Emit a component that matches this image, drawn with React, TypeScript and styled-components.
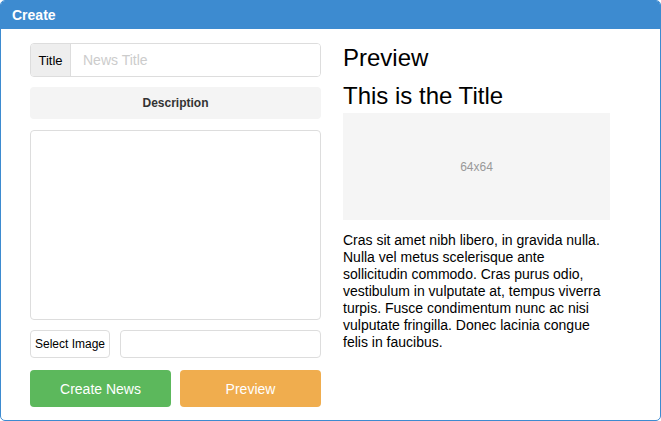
import styled, { createGlobalStyle } from "styled-components";

const Global = createGlobalStyle`
  html, body { margin: 0; padding: 0; background: #fff; }
  body { font-family: "Liberation Sans", Arial, sans-serif; color: #000; }
  * { box-sizing: border-box; }
`;

const Panel = styled.div`
  width: 661px;
  height: 421px;
  border: 1px solid #3d8bd0;
  border-radius: 5px;
  overflow: hidden;
  background: #fff;
`;

const Header = styled.div`
  height: 28px;
  background: #3d8bd0;
  color: #fff;
  font-weight: bold;
  font-size: 14px;
  display: flex;
  align-items: center;
  padding-left: 11px;
`;

const Body = styled.div`
  display: flex;
  gap: 22px;
  padding: 14px 0 0 29px;
`;

const LeftCol = styled.div`
  width: 291px;
  display: flex;
  flex-direction: column;
`;

const RightCol = styled.div`
  width: 267px;
  padding-top: 1px;
  display: flex;
  flex-direction: column;
`;

const InputGroup = styled.div`
  display: flex;
  height: 34px;
  border: 1px solid #ddd;
  border-radius: 4px;
  overflow: hidden;
  margin-bottom: 10px;
`;

const Addon = styled.div`
  width: 40px;
  background: #eee;
  border-right: 1px solid #ddd;
  display: flex;
  align-items: center;
  justify-content: center;
  font-size: 13px;
`;

const TextInput = styled.input`
  flex: 1;
  min-width: 0;
  border: none;
  outline: none;
  padding: 0 12px;
  font-family: inherit;
  font-size: 14px;
  &::placeholder { color: #ccc; }
`;

const Label = styled.div`
  height: 32px;
  background: #f4f4f4;
  border-radius: 4px;
  display: flex;
  align-items: center;
  justify-content: center;
  font-size: 12px;
  font-weight: bold;
  color: #333;
  margin-bottom: 11px;
`;

const TextArea = styled.textarea`
  height: 190px;
  border: 1px solid #ddd;
  border-radius: 4px;
  resize: none;
  outline: none;
  margin: 0 0 10px;
  font-family: inherit;
`;

const FileRow = styled.div`
  display: flex;
  gap: 10px;
  height: 28px;
  margin-bottom: 12px;
`;

const FileButton = styled.button`
  width: 80px;
  padding: 0;
  border: 1px solid #ddd;
  border-radius: 4px;
  background: #fff;
  font-family: inherit;
  font-size: 12px;
  color: #000;
`;

const FileInput = styled.input`
  flex: 1;
  min-width: 0;
  border: 1px solid #ddd;
  border-radius: 4px;
  outline: none;
`;

const ButtonRow = styled.div`
  display: flex;
  gap: 9px;
`;

const ActionButton = styled.button<{ $color: string }>`
  flex: 1;
  height: 37px;
  border: none;
  border-radius: 4px;
  background: ${(p) => p.$color};
  color: #fff;
  font-family: inherit;
  font-size: 14px;
`;

const Heading = styled.h2<{ $gap: number }>`
  margin: 0 0 ${(p) => p.$gap}px;
  font-size: 24px;
  font-weight: normal;
  line-height: 28px;
`;

const ImageBox = styled.div`
  height: 107px;
  background: #f5f5f5;
  display: flex;
  align-items: center;
  justify-content: center;
  color: #999;
  font-size: 12px;
  margin-bottom: 12px;
`;

const Paragraph = styled.p`
  margin: 0;
  font-size: 14px;
  line-height: 17px;
`;

export default function App() {
  return (
    <>
      <Global />
      <Panel>
        <Header>Create</Header>
        <Body>
          <LeftCol>
            <InputGroup>
              <Addon>Title</Addon>
              <TextInput placeholder="News Title" />
            </InputGroup>
            <Label>Description</Label>
            <TextArea />
            <FileRow>
              <FileButton>Select Image</FileButton>
              <FileInput />
            </FileRow>
            <ButtonRow>
              <ActionButton $color="#5cb85c">Create News</ActionButton>
              <ActionButton $color="#f0ad4e">Preview</ActionButton>
            </ButtonRow>
          </LeftCol>
          <RightCol>
            <Heading $gap={10}>Preview</Heading>
            <Heading $gap={3}>This is the Title</Heading>
            <ImageBox>64x64</ImageBox>
            <Paragraph>
              Cras sit amet nibh libero, in gravida nulla. Nulla vel metus scelerisque ante
              sollicitudin commodo. Cras purus odio, vestibulum in vulputate at, tempus viverra
              turpis. Fusce condimentum nunc ac nisi vulputate fringilla. Donec lacinia congue
              felis in faucibus.
            </Paragraph>
          </RightCol>
        </Body>
      </Panel>
    </>
  );
}
